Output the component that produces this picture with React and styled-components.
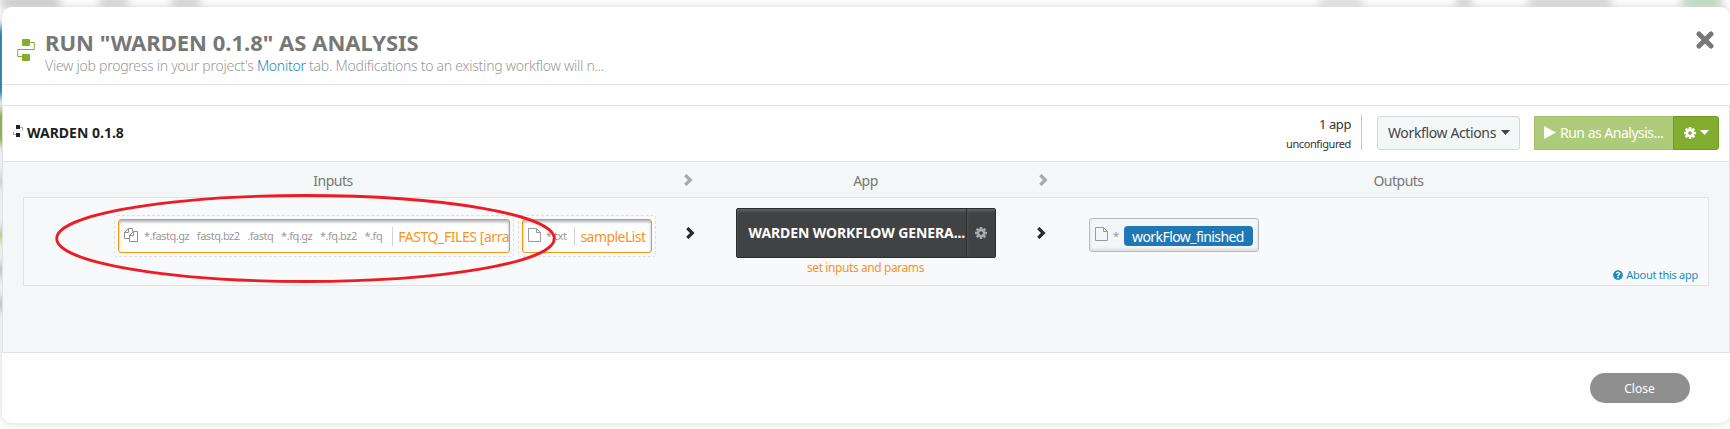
import React from 'react';
import styled, { createGlobalStyle } from 'styled-components';
import { FaQuestionCircle } from 'react-icons/fa';

const GlobalStyle = createGlobalStyle`
  *, *::before, *::after { box-sizing: border-box; }
  body {
    margin: 0;
    overflow: hidden;
    background: #fff;
    font-family: "Noto Sans", "Open Sans", sans-serif;
    font-size: 14px;
    color: #333;
  }
  button { font-family: inherit; margin: 0; cursor: pointer; }
  svg { display: block; flex: none; }
`;

const Page = styled.div`
  position: relative;
  height: 429px;
  padding: 7px 0 6px 2px;
  overflow: hidden;
`;

/* Out-of-focus page content that peeks out behind the dialog. */
const Backdrop = styled.div`
  position: absolute;
  inset: 0;
  filter: blur(4px);
`;

const Blob = styled.div`
  position: absolute;
  left: ${(p) => p.$x}px;
  top: ${(p) => p.$y}px;
  width: ${(p) => p.$w}px;
  height: ${(p) => p.$h}px;
  background: ${(p) => p.$color};
`;

const Modal = styled.div`
  position: relative;
  display: flex;
  flex-direction: column;
  height: 416px;
  background: #fff;
  border-radius: 10px;
  box-shadow: 0 0 10px rgba(0, 0, 0, 0.17);
`;

const Header = styled.header`
  display: flex;
  align-items: flex-start;
  height: 78px;
  padding: 22px 16px 0 15px;
  border-bottom: 1px solid #e2e2e2;
`;

const HeaderIcon = styled.div`
  width: 28px;
  padding-top: 10px;
`;

const Heading = styled.div`
  flex: 1;
`;

const Title = styled.h1`
  margin: 0;
  font-size: 22px;
  line-height: 26px;
  font-weight: 700;
  color: #777;
`;

const Subtitle = styled.p`
  margin: 2px 0 0;
  font-size: 14px;
  line-height: 18px;
  font-weight: 300;
  letter-spacing: -0.255px;
  color: #999;
`;

const Link = styled.a`
  color: #1a8abb;
`;

const CloseIcon = styled.button`
  padding: 2px 0 0;
  border: 0;
  background: none;
  color: #777;
`;

const Panel = styled.section`
  height: 248px;
  margin-top: 20px;
  border: 1px solid #dfe2e3;
  background: #f3f7f8;
`;

const Toolbar = styled.div`
  display: flex;
  align-items: center;
  height: 56px;
  padding: 0 10px 2px;
  border-bottom: 1px solid #dfe2e3;
  background: #fff;
`;

const WorkflowName = styled.div`
  display: flex;
  flex: 1;
  align-items: center;
  gap: 4px;
  font-weight: 700;
  color: #1c1f21;
  svg { margin-top: -4px; }
`;

const Status = styled.div`
  height: 35px;
  padding-right: 10px;
  margin-right: 15px;
  border-right: 1px solid #c4c4c4;
  text-align: right;
  line-height: 18px;
  font-size: 13px;
  letter-spacing: -0.4px;
  color: #333;
`;

const StatusNote = styled.div`
  font-size: 11px;
  line-height: 21px;
  letter-spacing: -0.4px;
`;

const ActionsButton = styled.button`
  display: flex;
  align-items: center;
  gap: 5px;
  height: 34px;
  width: 143px;
  margin-right: 14px;
  padding: 0 0 0 10px;
  border: 1px solid #d3d8da;
  border-radius: 3px;
  background: #f3f7f8;
  font-size: 14px;
  letter-spacing: -0.37px;
  color: #444;
`;

const RunButton = styled.button`
  display: flex;
  align-items: center;
  gap: 4px;
  height: 34px;
  width: 139px;
  padding: 0 0 0 9px;
  border: 1px solid #a3c26c;
  border-right: 0;
  background: #aecb79;
  font-size: 14px;
  letter-spacing: -0.5px;
  color: #fff;
  white-space: nowrap;
`;

const RunOptions = styled.button`
  display: flex;
  align-items: center;
  gap: 4px;
  height: 34px;
  width: 46px;
  padding: 0 0 0 10px;
  border: 1px solid #719a25;
  border-radius: 0 3px 3px 0;
  background: #82ad2f;
  color: #fff;
`;

const StageHeads = styled.div`
  display: grid;
  grid-template-columns: 660px 50px 305px 50px 1fr;
  height: 35px;
  text-align: center;
  line-height: 38px;
  letter-spacing: -0.5px;
  color: #777;
`;

const Arrow = styled.div`
  display: flex;
  justify-content: center;
  padding-top: ${(p) => p.$top}px;
  padding-left: ${(p) => p.$left || 0}px;
  padding-right: ${(p) => p.$right || 0}px;
  color: ${(p) => p.$color};
`;

const StageRow = styled.div`
  display: grid;
  grid-template-columns: 639px 50px 305px 50px 1fr;
  height: 89px;
  margin: 0 20px;
  border: 1px solid #dfe3e5;
  background: #f8f9fb;
`;

const Inputs = styled.div`
  display: flex;
  justify-content: flex-end;
  align-items: flex-start;
  gap: 4px;
  padding: 17px 7px 0 0;
`;

const DropZone = styled.div`
  height: 42px;
  width: ${(p) => p.$width}px;
  padding: 3px;
  border: 1px dashed #dcdfe1;
  border-radius: 3px;
`;

const InputField = styled.div`
  display: flex;
  align-items: center;
  height: 34px;
  padding-left: 5px;
  overflow: hidden;
  white-space: nowrap;
  border: 1px solid #f39a14;
  border-radius: 3px;
  background: #fff;
  box-shadow: inset 0 2px 3px rgba(0, 0, 0, 0.3);
  svg { margin-top: -2px; }
`;

const Formats = styled.div`
  display: flex;
  gap: 7.7px;
  margin-left: ${(p) => p.$left}px;
  padding-right: ${(p) => p.$right}px;
  line-height: 20px;
  font-size: 11px;
  letter-spacing: -0.47px;
  color: #999;
  border-right: 1px solid #d3d3d3;
  span { margin-top: -1px; }
`;

const FieldName = styled.div`
  margin-left: 5px;
  font-size: 14px;
  letter-spacing: ${(p) => p.$spacing}px;
  color: #f7941d;
`;

const AppStage = styled.div`
  display: flex;
  flex-direction: column;
  align-items: center;
  padding-top: 10px;
`;

const AppBlock = styled.div`
  display: flex;
  width: 260px;
  height: 50px;
  border: 1px solid #2b2c2d;
  border-radius: 2px;
  background: #414243;
  color: #fff;
`;

const AppName = styled.div`
  flex: 1;
  padding-left: 12px;
  line-height: 48px;
  font-weight: 700;
  font-size: 14px;
  letter-spacing: -0.1px;
  white-space: nowrap;
  box-shadow: inset 1px 3px 3px -1px #626364;
`;

const AppSettings = styled.div`
  display: flex;
  align-items: center;
  justify-content: center;
  width: 29px;
  border-left: 1px solid #2b2c2d;
  box-shadow: inset 1px 3px 3px -1px #626364;
  color: #aaa;
`;

const AppHint = styled.div`
  font-size: 12px;
  line-height: 19px;
  letter-spacing: -0.41px;
  color: #f7941d;
`;

const Outputs = styled.div`
  display: flex;
  flex-direction: column;
  align-items: flex-start;
  justify-content: space-between;
  padding: 20px 10px 1px 21px;
`;

const OutputField = styled.div`
  display: flex;
  align-items: center;
  width: 170px;
  height: 34px;
  padding-left: 5px;
  border: 1px solid #b7babb;
  border-radius: 3px;
  background: #f3f6f7;
  box-shadow: inset 0 -2px 3px rgba(0, 0, 0, 0.1);
  svg { margin-top: -2px; }
`;

const Wildcard = styled.span`
  width: 11px;
  margin-left: 5px;
  font-size: 11px;
  color: #999;
`;

const Pill = styled.span`
  width: 129px;
  height: 20px;
  margin: 2px 0 0;
  padding-left: 8px;
  border-radius: 4px;
  background: #1f78b4;
  font-size: 14px;
  line-height: 21px;
  letter-spacing: -0.57px;
  color: #fff;
`;

const About = styled.a`
  display: flex;
  align-items: center;
  align-self: flex-end;
  gap: 3px;
  font-size: 11px;
  line-height: 18px;
  letter-spacing: -0.27px;
  color: #1a8abb;
`;

const Footer = styled.footer`
  display: flex;
  justify-content: flex-end;
  padding: 20px 40px 0;
`;

const CloseButton = styled.button`
  width: 100px;
  height: 30px;
  padding: 1px 1px 0 0;
  border: 0;
  border-radius: 15px;
  background: #8f8f8f;
  font-size: 12px;
  color: #fff;
`;

const Highlight = styled.svg`
  position: absolute;
  left: 53px;
  top: 192px;
  pointer-events: none;
`;

const WorkflowIcon = () => (
  <svg width="18" height="22" viewBox="0 0 18 22" fill="none" stroke="#82ad2f">
    <path d="M12 3.5H17.3V10.5H.7V17.5H6" />
    <rect x="5" y="0" width="8" height="7" rx="1" fill="#82ad2f" stroke="none" />
    <rect x="5" y="15" width="8" height="7" rx="1" fill="#82ad2f" stroke="none" />
  </svg>
);

const SmallWorkflowIcon = () => (
  <svg width="10" height="12" viewBox="0 0 10 12" fill="none" stroke="#999">
    <path d="M7 2.5H9.5V5.5M.5 6.5V9.5H3" strokeWidth=".8" />
    <path d="M9.5 5.8H.5" stroke="#ddd" strokeWidth=".7" />
    <path d="M3 0H7V4H3ZM3 8H7V12H3Z" fill="#222" stroke="none" />
  </svg>
);

const CrossIcon = () => (
  <svg width="18" height="18" viewBox="0 0 18 18" stroke="currentColor" strokeWidth="5" strokeLinecap="round">
    <path d="M3 3L15 15M15 3L3 15" />
  </svg>
);

const Gear = ({ size }) => (
  <svg width={size} height={size} viewBox="-6 -6 12 12" stroke="currentColor" fill="none">
    <circle r="3.1" strokeWidth="2.6" />
    {[0, 45, 90, 135].map((angle) => (
      <path key={angle} d="M0 -6V-3.8M0 3.8V6" strokeWidth="2.5" transform={`rotate(${angle})`} />
    ))}
  </svg>
);

const Caret = () => (
  <svg width="9" height="5" viewBox="0 0 9 5" fill="currentColor">
    <path d="M0 0H9L4.5 5Z" />
  </svg>
);

const Play = () => (
  <svg width="12" height="13" viewBox="0 0 12 13" fill="currentColor">
    <path d="M0 0L12 6.5L0 13Z" />
  </svg>
);

const Chevron = () => (
  <svg width="9" height="12" viewBox="0 0 9 12" fill="none" stroke="currentColor" strokeWidth="3.2">
    <path d="M1.3 1L6.3 6L1.3 11" />
  </svg>
);

const FileIcon = () => (
  <svg width="13" height="14" viewBox="0 0 13 14" fill="none" stroke="#999">
    <path d="M.5 .5H8.5L12.5 4.5V13.5H.5ZM8.5 .5V4.5H12.5" />
  </svg>
);

const FilesIcon = () => (
  <svg width="14" height="14" viewBox="0 0 14 14" fill="none" stroke="#909090">
    <path d="M5.5 10.5H.5V4.5L4.5 .5H8.5V3.5M4.5 .5V4.5H.5" />
    <path d="M9.5 3.5H13.5V13.5H5.5V7.5L9.5 3.5V7.5H5.5" />
  </svg>
);

const fastqFormats = ['*.fastq.gz', 'fastq.bz2', '.fastq', '*.fq.gz', '*.fq.bz2', '*.fq'];

const blobs = [
  [0, -4, 60, 10, '#c6c6c6'],
  [100, -4, 28, 10, '#d0d0d0'],
  [172, -4, 28, 10, '#d0d0d0'],
  [1320, -4, 42, 10, '#dcdcdc'],
  [1457, -4, 14, 10, '#cccccc'],
  [1529, -4, 82, 10, '#d2d2d2'],
  [1682, -4, 40, 10, '#b5d4b5'],
  [-6, 27, 12, 70, '#0879ae'],
  [-6, 110, 12, 34, '#85ad2f'],
  [-6, 176, 12, 10, '#d0d0d0'],
  [-6, 229, 12, 12, '#b8d18a'],
  [-6, 264, 12, 12, '#c5c5c5'],
  [-6, 298, 12, 12, '#c5c5c5'],
];

export default function App() {
  return (
    <Page>
      <GlobalStyle />
      <Backdrop>
        {blobs.map(([x, y, w, h, color]) => (
          <Blob key={`${x}-${y}`} $x={x} $y={y} $w={w} $h={h} $color={color} />
        ))}
      </Backdrop>
      <Modal>
        <Header>
          <HeaderIcon><WorkflowIcon /></HeaderIcon>
          <Heading>
            <Title>RUN "WARDEN 0.1.8" AS ANALYSIS</Title>
            <Subtitle>
              View job progress in your project's <Link>Monitor</Link> tab. Modifications to an existing workflow will n...
            </Subtitle>
          </Heading>
          <CloseIcon aria-label="Close dialog"><CrossIcon /></CloseIcon>
        </Header>
        <Panel>
          <Toolbar>
            <WorkflowName><SmallWorkflowIcon />WARDEN 0.1.8</WorkflowName>
            <Status>1 app<StatusNote>unconfigured</StatusNote></Status>
            <ActionsButton>Workflow Actions<Caret /></ActionsButton>
            <RunButton><Play />Run as Analysis...</RunButton>
            <RunOptions><Gear size={12} /><Caret /></RunOptions>
          </Toolbar>
          <StageHeads>
            <div>Inputs</div>
            <Arrow $top={12} $color="#aaa"><Chevron /></Arrow>
            <div>App</div>
            <Arrow $top={12} $color="#aaa"><Chevron /></Arrow>
            <div>Outputs</div>
          </StageHeads>
          <StageRow>
            <Inputs>
              <DropZone $width={400}>
                <InputField>
                  <FilesIcon />
                  <Formats $left={6} $right={10}>
                    {fastqFormats.map((format) => <span key={format}>{format}</span>)}
                  </Formats>
                  <FieldName $spacing={-0.43}>FASTQ_FILES [arra</FieldName>
                </InputField>
              </DropZone>
              <DropZone $width={138}>
                <InputField>
                  <FileIcon />
                  <Formats $left={5} $right={8}><span>*.txt</span></Formats>
                  <FieldName $spacing={-0.55}>sampleList</FieldName>
                </InputField>
              </DropZone>
            </Inputs>
            <Arrow $top={29} $left={4} $color="#2b2b2b"><Chevron /></Arrow>
            <AppStage>
              <AppBlock>
                <AppName>WARDEN WORKFLOW GENERA...</AppName>
                <AppSettings><Gear size={12} /></AppSettings>
              </AppBlock>
              <AppHint>set inputs and params</AppHint>
            </AppStage>
            <Arrow $top={29} $right={3} $color="#2b2b2b"><Chevron /></Arrow>
            <Outputs>
              <OutputField>
                <FileIcon />
                <Wildcard>*</Wildcard>
                <Pill>workFlow_finished</Pill>
              </OutputField>
              <About><FaQuestionCircle size={10} />About this app</About>
            </Outputs>
          </StageRow>
        </Panel>
        <Footer><CloseButton>Close</CloseButton></Footer>
      </Modal>
      <Highlight width="506" height="93" fill="none" stroke="#ed1c24" strokeWidth="2.8">
        <ellipse cx="252.5" cy="46.5" rx="248.8" ry="43" />
      </Highlight>
    </Page>
  );
}
